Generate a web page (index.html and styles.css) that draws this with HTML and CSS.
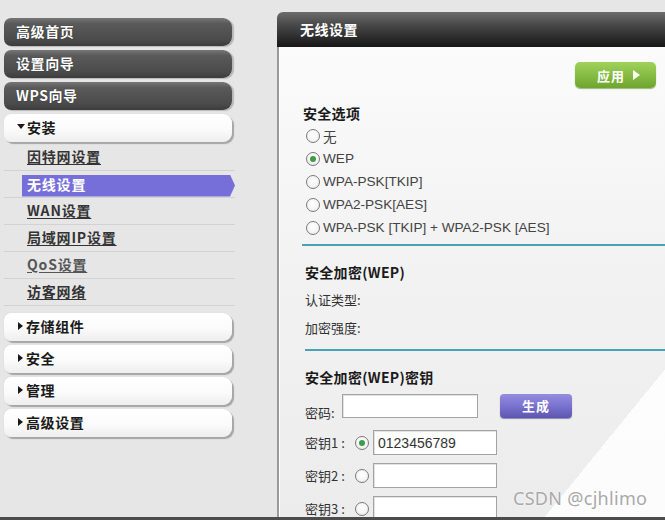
FILE: index.html
```html
<!DOCTYPE html>
<html lang="zh-CN">
<head>
<meta charset="utf-8">
<title>无线设置</title>
<link rel="stylesheet" href="styles.css">
</head>
<body>
<div class="page">
  <nav class="sidebar">
    <a class="btn dark">高级首页</a>
    <a class="btn dark">设置向导</a>
    <a class="btn dark">WPS向导</a>
    <a class="btn light open"><span class="tri down"></span>安装</a>
    <ul class="submenu">
      <li><a class="sub">因特网设置</a></li>
      <li class="active"><a class="sub">无线设置</a></li>
      <li><a class="sub">WAN设置</a></li>
      <li><a class="sub">局域网IP设置</a></li>
      <li><a class="sub visited">QoS设置</a></li>
      <li><a class="sub">访客网络</a></li>
    </ul>
    <a class="btn light"><span class="tri right"></span>存储组件</a>
    <a class="btn light"><span class="tri right"></span>安全</a>
    <a class="btn light"><span class="tri right"></span>管理</a>
    <a class="btn light"><span class="tri right"></span>高级设置</a>
  </nav>
  <main class="panel">
    <div class="panel-head">无线设置</div>
    <div class="panel-body">
      <div class="actions">
        <button class="apply">应用<span class="tri right white"></span></button>
      </div>
      <h3 class="heading first">安全选项</h3>
      <div class="radios">
        <div class="radio-row"><span class="radio"></span>无</div>
        <div class="radio-row"><span class="radio checked"></span>WEP</div>
        <div class="radio-row"><span class="radio"></span>WPA-PSK[TKIP]</div>
        <div class="radio-row"><span class="radio"></span>WPA2-PSK[AES]</div>
        <div class="radio-row"><span class="radio"></span>WPA-PSK [TKIP] + WPA2-PSK [AES]</div>
      </div>
      <div class="rule rule-a"></div>
      <div class="section">
        <h3 class="heading">安全加密(WEP)</h3>
        <div class="field">认证类型:</div>
        <div class="field">加密强度:</div>
        <div class="rule rule-b"></div>
        <h3 class="heading">安全加密(WEP)密钥</h3>
        <div class="pw-row">
          <span class="lbl pw-lbl">密码:</span>
          <span class="input pw-input"></span>
          <button class="gen">生成</button>
        </div>
        <div class="key-row">
          <span class="lbl key-lbl">密钥1 :</span>
          <span class="radio checked"></span>
          <span class="input key-input">0123456789</span>
        </div>
        <div class="key-row">
          <span class="lbl key-lbl">密钥2 :</span>
          <span class="radio"></span>
          <span class="input key-input"></span>
        </div>
        <div class="key-row">
          <span class="lbl key-lbl">密钥3 :</span>
          <span class="radio"></span>
          <span class="input key-input"></span>
        </div>
      </div>
    </div>
    <div class="watermark">CSDN @cjhlimo</div>
  </main>
</div>
</body>
</html>
```

FILE: styles.css
```css
html, body {
  margin: 0;
  padding: 0;
  background: #e6e6e6;
  overflow: hidden;
}

.page {
  width: 665px;
  height: 520px;
  box-sizing: border-box;
  border-bottom: 3px solid #4c4c4c;
  display: flex;
  overflow: hidden;
  font-family: "Noto Sans CJK SC", "Liberation Sans", sans-serif;
  color: #333;
}

/* ---------- sidebar ---------- */
.sidebar {
  width: 277px;
  flex: none;
  box-sizing: border-box;
  padding: 18px 0 0 4px;
  display: flex;
  flex-direction: column;
}

.btn {
  display: flex;
  align-items: center;
  width: 228px;
  height: 28px;
  box-sizing: border-box;
  padding-bottom: 3px;
  border-radius: 7px 9px 9px 7px;
  margin-bottom: 4px;
  font-size: 14px;
  font-weight: bold;
  letter-spacing: 0.6px;
  cursor: pointer;
}

.btn.dark {
  padding-left: 12px;
  color: #fff;
  background: linear-gradient(to bottom, #767676 0%, #5a5a5a 20%, #4a4a4a 80%, #3c3c3c 100%);
  box-shadow: 2px 1px 1px #b8b8b8;
  text-shadow: 0 0 1px #222;
}

.btn.light {
  padding-left: 14px;
  color: #1a1a1a;
  background: linear-gradient(to bottom, #ffffff 0%, #fbfbfb 55%, #eeeeee 100%);
  box-shadow: 2px 2px 1px #a6a6a6, 0 0 1px #c8c8c8;
}

.btn.open {
  margin-bottom: 2px;
}

.tri {
  display: inline-block;
  width: 0;
  height: 0;
  margin-right: 3px;
}

.tri.right {
  border-top: 4px solid transparent;
  border-bottom: 4px solid transparent;
  border-left: 5px solid #1a1a1a;
}

.tri.down {
  border-left: 4px solid transparent;
  border-right: 4px solid transparent;
  border-top: 5px solid #1a1a1a;
  margin-left: -1px;
  margin-right: 2px;
}

.tri.right.white {
  border-left-color: #fff;
  border-top-width: 5px;
  border-bottom-width: 5px;
  border-left-width: 7px;
  margin: 0 0 0 8px;
}

.submenu {
  list-style: none;
  margin: 0 0 7px 0;
  padding: 0;
  width: 231px;
}

.submenu li {
  height: 27px;
  box-sizing: border-box;
  padding-bottom: 3px;
  border-bottom: 1px solid #d2d2d2;
  display: flex;
  align-items: center;
}

.submenu li.active {
  padding-bottom: 0;
}

.sub {
  padding-left: 23px;
  font-size: 14px;
  font-weight: bold;
  letter-spacing: 0.8px;
  color: #333;
  text-decoration: underline;
  text-underline-offset: 2px;
  cursor: pointer;
}

.sub.visited {
  color: #555;
}

.submenu li.active .sub {
  margin-left: 18px;
  margin-top: 3px;
  width: 218px;
  height: 22px;
  box-sizing: border-box;
  padding: 0 0 3px 5px;
  display: flex;
  align-items: center;
  color: #fff;
  text-decoration: none;
  background: #776fd9;
  clip-path: polygon(0 0, 208px 0, 100% 50%, 208px 100%, 0 100%);
}

/* ---------- panel ---------- */
.panel {
  flex: 1;
  margin-top: 12px;
  display: flex;
  flex-direction: column;
  position: relative;
  min-width: 0;
}

.panel-head {
  height: 35px;
  flex: none;
  box-sizing: border-box;
  padding: 0 0 2px 23px;
  display: flex;
  align-items: center;
  border-top-left-radius: 6px;
  background: linear-gradient(to bottom, #6c6c6c 0%, #4a4a4a 35%, #2a2a2a 75%, #171717 100%);
  color: #fff;
  font-size: 14px;
  font-weight: bold;
  letter-spacing: 0.5px;
}

.panel-body {
  flex: 1;
  border-left: 2px solid #9a9a9a;
  box-shadow: inset 1px 0 0 #ffffff;
  padding: 15px 9px 0 24px;
  background:
    linear-gradient(to bottom right, transparent 84%, rgba(255,255,255,0.85) 84%),
    linear-gradient(to bottom, #fbfbfb 0%, #f3f3f3 40%, #ececec 100%);
}

.actions {
  display: flex;
  justify-content: flex-end;
}

.apply {
  width: 81px;
  height: 26px;
  border: none;
  border-radius: 5px;
  padding: 0 0 0 6px;
  display: flex;
  align-items: center;
  justify-content: center;
  background: linear-gradient(to bottom, #9fd25c 0%, #86bd43 50%, #6fa42f 100%);
  box-shadow: 0 1px 1px #9ab97a;
  color: #fff;
  font-family: "Noto Sans CJK SC", sans-serif;
  font-size: 13px;
  font-weight: bold;
  letter-spacing: 1px;
}

.heading {
  margin: 12px 0 0 0;
  font-size: 14px;
  font-weight: bold;
  line-height: 28px;
  color: #1a1a1a;
  letter-spacing: 0.3px;
}

.heading.first {
  margin-top: 15px;
  line-height: 21px;
}

.radios {
  display: flex;
  flex-direction: column;
}

.radio-row {
  height: 23px;
  display: flex;
  align-items: center;
  padding-left: 3px;
  gap: 3px;
  font-family: "Liberation Sans", "Noto Sans CJK SC", sans-serif;
  font-size: 13.6px;
  color: #444;
}

.radio {
  flex: none;
  width: 14px;
  height: 14px;
  box-sizing: border-box;
  border: 1px solid #7a7a7a;
  border-radius: 50%;
  background: radial-gradient(circle at 50% 40%, #ffffff 0%, #f4f4f4 60%, #dcdcdc 100%);
  display: inline-flex;
  align-items: center;
  justify-content: center;
}

.radio.checked::after {
  content: "";
  width: 6px;
  height: 6px;
  border-radius: 50%;
  background: #3f9b46;
}

.rule {
  height: 2px;
  background: #4aa2b6;
  margin-right: -9px;
}

.rule-a {
  margin-top: 5px;
  margin-left: -1px;
}

.section {
  padding-left: 2px;
}

.field {
  font-size: 13px;
  line-height: 28px;
  color: #333;
}

.rule-b {
  margin-top: 7px;
}

.lbl {
  font-size: 13px;
  color: #333;
}

.pw-row {
  margin-top: 3px;
  height: 24px;
  display: flex;
  align-items: center;
}

.pw-lbl {
  width: 37px;
  flex: none;
  line-height: 18px;
  align-self: flex-end;
  margin-bottom: -4px;
}

.input {
  display: flex;
  align-items: center;
  box-sizing: border-box;
  background: #fff;
  border: 1px solid #a3a3a3;
  box-shadow: inset 1px 1px 0 #e2e2e2;
  font-family: "Liberation Sans", sans-serif;
  font-size: 14px;
  color: #333;
  padding-left: 4px;
}

.pw-input {
  width: 136px;
  height: 24px;
}

.gen {
  margin-left: 22px;
  width: 72px;
  height: 24px;
  border: none;
  border-radius: 4px;
  padding-bottom: 2px;
  background: linear-gradient(to bottom, #958de0 0%, #7a72cf 50%, #5d56ae 100%);
  box-shadow: 0 1px 1px #8a86b0;
  color: #fff;
  font-family: "Noto Sans CJK SC", sans-serif;
  font-size: 13px;
  font-weight: bold;
  letter-spacing: 1px;
}

.key-row {
  margin-top: 8px;
  display: flex;
  align-items: center;
}

.pw-row + .key-row {
  margin-top: 12px;
}

.key-lbl {
  width: 50px;
  flex: none;
}

.key-row .radio {
  margin-right: 4px;
}

.key-input {
  width: 124px;
  height: 25px;
}

.watermark {
  position: absolute;
  left: 236px;
  top: 474px;
  font-family: "Noto Sans", "Liberation Sans", sans-serif;
  font-size: 18px;
  color: #a9a9a9;
  letter-spacing: 0.3px;
  text-shadow: 0 0 2px #ffffff;
  white-space: nowrap;
}
```
